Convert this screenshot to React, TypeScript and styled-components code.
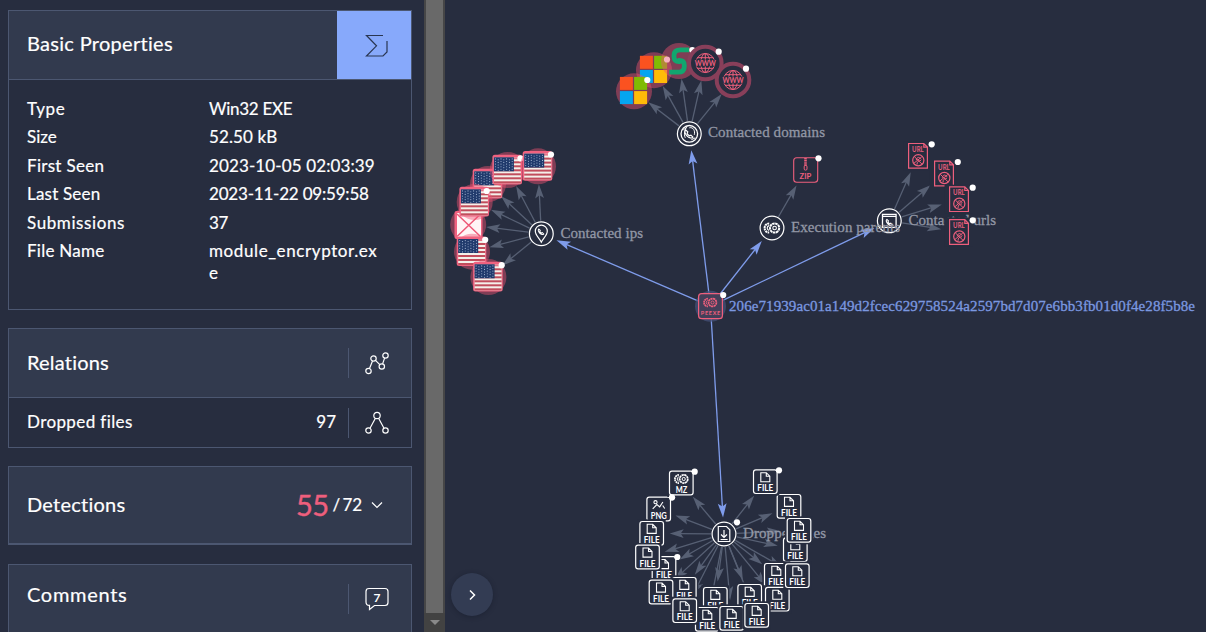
import React from "react";
import styled, { createGlobalStyle } from "styled-components";

const BG = "#272d3f";
const PINK = "#ee5f7d";
const HALO = "rgba(238, 82, 112, 0.45)";

const GlobalStyle = createGlobalStyle`
  * { box-sizing: border-box; }
  html, body { margin: 0; overflow: hidden; background: ${BG}; }
`;

const Page = styled.div`
  display: flex;
  width: 1206px;
  height: 632px;
  overflow: hidden;
  background: ${BG};
  color: #fff;
  font-family: Lato, "Liberation Sans", sans-serif;
  font-variant-ligatures: none;
`;

const Sidebar = styled.aside`
  display: flex;
  flex-direction: column;
  flex: none;
  gap: 18px;
  width: 424px;
  height: 632px;
  padding: 10px 12px 0 8px;
  overflow: hidden;
  -webkit-text-stroke: 0.2px currentColor;
`;

const Panel = styled.section<{ $height: number; $thick?: boolean; $offset?: number }>`
  flex: none;
  height: ${(p) => p.$height}px;
  margin-top: ${(p) => p.$offset ?? 0}px;
  border: 1px solid #4c5771;
  border-bottom-width: ${(p) => (p.$thick ? 2 : 1)}px;
`;

const PanelHeader = styled.header<{ $height: number; $line?: boolean }>`
  display: flex;
  align-items: center;
  justify-content: space-between;
  height: ${(p) => p.$height}px;
  padding-left: 18px;
  background: #323a4e;
  border-bottom: ${(p) => (p.$line ? "1px solid #4c5771" : "0")};
`;

const Title = styled.h2<{ $spacing: number; $lift: number }>`
  margin: 0;
  padding-bottom: ${(p) => p.$lift}px;
  font-size: 20px;
  font-weight: 400;
  line-height: 26px;
  letter-spacing: ${(p) => p.$spacing}px;
`;

const ReportButton = styled.div`
  display: flex;
  align-items: center;
  justify-content: center;
  width: 74px;
  height: 68px;
  padding: 1px 0 0 6px;
  background: #87a9fb;
`;

const ActionCell = styled.div`
  display: flex;
  align-items: center;
  justify-content: center;
  width: 63px;
  height: 30px;
  padding-right: 6px;
  border-left: 1px solid #4c5771;
`;

const Properties = styled.dl`
  display: flex;
  flex-direction: column;
  gap: 6.4px;
  margin: 0;
  padding: 18px;
`;

const Property = styled.div`
  display: grid;
  grid-template-columns: 182px 172px;
  font-size: 17px;
  line-height: 22px;
`;

const Label = styled.dt<{ $spacing: number }>`
  letter-spacing: ${(p) => p.$spacing}px;
`;

const Value = styled.dd<{ $spacing: number }>`
  margin: 0;
  overflow-wrap: anywhere;
  letter-spacing: ${(p) => p.$spacing}px;
`;

const Row = styled.div`
  display: flex;
  align-items: center;
  height: 49px;
  padding-left: 18px;
  font-size: 17px;
`;

const RowName = styled.span`
  flex: 1;
  padding-bottom: 2px;
  letter-spacing: 0.4px;
`;

const RowCount = styled.span`
  margin-right: 12px;
  padding-bottom: 2px;
`;

const Score = styled.div`
  display: flex;
  align-items: center;
  padding-right: 27px;
  gap: 4px;
`;

const Positives = styled.span`
  color: ${PINK};
  font-size: 29px;
  line-height: 36px;
  letter-spacing: -0.6px;
  -webkit-text-stroke: 0.4px currentColor;
`;

const Total = styled.span`
  margin-right: 4px;
  padding-bottom: 1px;
  font-size: 17px;
  letter-spacing: -0.1px;
  word-spacing: -1.8px;
`;

const Scrollbar = styled.div`
  display: flex;
  flex: none;
  flex-direction: column;
  width: 21px;
  height: 632px;
  background: #424242;
`;

const Thumb = styled.div`
  height: 613px;
  background: #696969;
  border: solid #464647;
  border-width: 0 2px;
`;

const ScrollArrow = styled.div`
  align-self: center;
  margin-top: 7px;
  border: solid transparent;
  border-width: 5px 5px 0;
  border-top-color: #8a8a8a;
`;

const Canvas = styled.main`
  position: relative;
  flex: 1;
  height: 632px;
`;

const Graph = styled.svg`
  display: block;
`;

const ExpandButton = styled.button`
  position: absolute;
  left: 6px;
  top: 573px;
  display: flex;
  align-items: center;
  justify-content: center;
  width: 42px;
  height: 43px;
  padding: 0;
  border: 0;
  border-radius: 50%;
  background: #333c53;
  box-shadow: 0 1px 5px rgba(15, 20, 35, 0.35);
`;

type Pt = [number, number];

function Edge({ from, to, color, end = 18, width = 1.3 }: { from: Pt; to: Pt; color: string; end?: number; width?: number }) {
  const dx = to[0] - from[0];
  const dy = to[1] - from[1];
  const len = Math.hypot(dx, dy);
  const angle = (Math.atan2(dy, dx) * 180) / Math.PI;
  const tip = len - end;
  return (
    <g transform={`translate(${from[0]} ${from[1]}) rotate(${angle})`}>
      <path d={`M13 0H${tip - 8}`} stroke={color} strokeWidth={width} />
      <path d={`M${tip} 0l-14 4.4 3-4.4-3-4.4z`} fill={color} />
    </g>
  );
}

const Dot = ({ at }: { at: Pt }) => <circle cx={at[0]} cy={at[1]} r="3.1" fill="#fff" />;

function Gears() {
  return (
    <g fill="none" stroke="currentColor" strokeWidth="1.1">
      <path d="M-2.2-4.6a4.6 4.6 0 1 0 0 9.2" strokeWidth="2" strokeDasharray="2 .5" />
      <path d="M-2.4-2.4a2.5 2.5 0 0 0 0 4.8" />
      <circle cx="3.2" cy="0" r="4.6" strokeWidth="2" strokeDasharray="2.6 .5" />
      <circle cx="3.2" cy="0" r="1.8" />
    </g>
  );
}

function Tile({ at, label, kind = "file", dot }: { at: Pt; label: string; kind?: string; dot?: Pt }) {
  return (
    <g>
      <g transform={`translate(${at[0]} ${at[1]})`} color="#fff">
        <rect x="-14" y="-14" width="28" height="28" fill={BG} />
        <rect x="-11.8" y="-11.8" width="23.6" height="23.6" rx="2.4" fill="none" stroke="#fff" strokeWidth="1.2" />
        {kind === "file" && (
          <path d="M-4.5-9H1l3.5 3.5V.1h-9zM1-9v3.5h3.5" fill="none" stroke="#fff" strokeWidth="1.1" />
        )}
        {kind === "gears" && (
          <g transform="translate(-.4 -4) scale(.88)">
            <Gears />
          </g>
        )}
        {kind === "image" && (
          <g fill="none" stroke="#fff" strokeWidth="1.1">
            <circle cx="-3.2" cy="-6.8" r="1.6" />
            <path d="M-6-.2l4.2-4.2 2.8 2.3L4.2-7M4-3.5l2 3" />
          </g>
        )}
        <text
          x={label === "MZ" ? -5.5 : -8}
          y="9.6"
          fontSize="8.8"
          fontWeight="700"
          fill="#fff"
          textLength={label === "MZ" ? 11.5 : 16}
          lengthAdjust="spacingAndGlyphs"
        >
          {label}
        </text>
      </g>
      {dot && <Dot at={dot} />}
    </g>
  );
}

function Flag({ at, dot }: { at: Pt; dot?: Pt }) {
  const stars = [];
  for (let r = 0; r < 5; r++) {
    for (let c = 0; c < 7; c++) {
      stars.push(<circle key={`${r}-${c}`} cx={-11.8 + c * 2.8} cy={-10.9 + r * 2.6 + (c % 2) * 0.9} r=".55" fill="#a4b6d2" />);
    }
  }
  return (
    <g>
      <circle cx={at[0]} cy={at[1]} r="18" fill={HALO} />
      <g transform={`translate(${at[0] - 0.5} ${at[1] - 0.2})`}>
        <rect x="-14.8" y="-15" width="29.6" height="29.6" rx="2.5" fill="#f06280" />
        <rect x="-13.3" y="-12.5" width="27" height="26" fill="#f4f0ea" />
        {[0, 1, 2, 3, 4, 5, 6].map((i) => (
          <rect key={i} x="-13.3" y={-12.5 + i * 4} width="27" height="2" fill={i === 0 ? "#e3768a" : "#c14d5c"} />
        ))}
        <rect x="-13.3" y="-12.5" width="20" height="14" fill="#203a6c" />
        {stars}
      </g>
      {dot && <Dot at={dot} />}
    </g>
  );
}

function Windows({ at }: { at: Pt }) {
  return (
    <g>
      <circle cx={at[0]} cy={at[1]} r="18" fill={HALO} />
      <g transform={`translate(${at[0] - 0.6} ${at[1] - 0.9})`}>
        <path d="M-13.5-13.5h13v13h-13z" fill="#fb5220" />
        <path d="M.7-13.5h13v13h-13z" fill="#80bb03" />
        <path d="M-13.5.7h13v13h-13z" fill="#05a5f0" />
        <path d="M.7.7h13v13h-13z" fill="#ffbb08" />
      </g>
    </g>
  );
}

function Web({ at, dot }: { at: Pt; dot: Pt }) {
  return (
    <g>
      <circle cx={at[0]} cy={at[1]} r="16.3" fill={BG} stroke="#883f5a" strokeWidth="4" />
      <g transform={`translate(${at[0]} ${at[1]})`} fill="none" stroke={PINK} strokeWidth="1">
        <circle r="9.5" />
        <ellipse rx="4.5" ry="9.5" />
        <path d="M0-9.5v19M-8-5.3h16M-8 5.3h16" />
        <rect x="-11" y="-3.4" width="22" height="6.8" fill={BG} stroke="none" />
        <text x="-10.6" y="3" fontSize="8" fontWeight="700" fill={PINK} stroke="none" textLength="21.2" lengthAdjust="spacingAndGlyphs">
          WWW
        </text>
      </g>
      <Dot at={dot} />
    </g>
  );
}

function UrlNode({ at, dot }: { at: Pt; dot: Pt }) {
  return (
    <g>
      <g transform={`translate(${at[0]} ${at[1]})`} fill="none" stroke={PINK} strokeWidth="1.2">
        <rect x="-14.5" y="-14.5" width="28.5" height="29" fill={BG} stroke="none" />
        <path d="M-9.4-12.3H5.8l3.6 3.6v21H-9.4zM5.8-12.3v3.6h3.6" />
        <circle cy="4.5" cx=".3" r="5.6" />
        <path d="M-3.5 1l7.6 7.4M-4 7.4L3.8 1M-1.8 4.3c1-3.5 3-3.5 5-.7M-1 8.8c0-3 1.5-4 4-4.1" strokeWidth="1" />
        <text x="-5.9" y="-3.8" fontSize="6.8" fontWeight="700" fill={PINK} stroke="none" textLength="11.6" lengthAdjust="spacingAndGlyphs">
          URL
        </text>
      </g>
      <Dot at={dot} />
    </g>
  );
}

const Hub = ({ at, children }: { at: Pt; children: React.ReactNode }) => (
  <g transform={`translate(${at[0]} ${at[1]})`} color="#fff">
    <circle r="11.9" fill={BG} stroke="#fff" strokeWidth="1.2" />
    {children}
  </g>
);

function GraphLabel({ x, y, width, color = "#9297a5", children }: { x: number; y: number; width: number; color?: string; children: string }) {
  return (
    <text x={x} y={y} fontSize="15" fill={color} stroke={color} strokeWidth=".3" fontFamily='"Liberation Serif", serif' textLength={width}>
      {children}
    </text>
  );
}

const HANDSET = "M-3.6-3.9c-1.6 1-1 3.6 1.2 5.9s4.9 2.9 6 1.3l-2-2-1.5.7c-1-.5-1.9-1.3-2.3-2.3l.7-1.5z";

const domainsHub: Pt = [689.3, 133.8];
const ipsHub: Pt = [541.3, 233.7];
const parentsHub: Pt = [772, 228];
const urlsHub: Pt = [889.3, 220.8];
const filesHub: Pt = [724, 534];
const root: Pt = [710.5, 306.2];

const domainNodes: Pt[] = [[634, 91.3], [654, 70.2], [679, 61], [705.3, 63], [733, 80]];
const ipNodes: Pt[] = [[538, 166.3], [507.7, 170], [488, 184], [474.7, 202], [468.2, 224.7], [472, 251.7], [488.4, 277]];
const urlNodes: Pt[] = [[918, 155.8], [944, 173.5], [959, 199.2], [959, 232]];

interface FileNode {
  at: Pt;
  label?: string;
  kind?: string;
  dot?: Pt;
}

const fileNodes: FileNode[] = [
  { at: [664, 568.5], dot: [677.3, 557] },
  { at: [684.3, 589.3] },
  { at: [715.3, 599.3] },
  { at: [749.7, 596.3] },
  { at: [795.3, 549.7] },
  { at: [776.3, 575.3] },
  { at: [777.3, 599.2] },
  { at: [707.3, 619.3] },
  { at: [658.7, 509], label: "PNG", kind: "image", dot: [672, 497.3] },
  { at: [681.3, 483], label: "MZ", kind: "gears", dot: [694.7, 471.7] },
  { at: [651.7, 533.3] },
  { at: [647.5, 557] },
  { at: [661, 592] },
  { at: [684.7, 610.7] },
  { at: [731.7, 618.3] },
  { at: [756.7, 615.3] },
  { at: [797.3, 575.7] },
  { at: [789, 506.3] },
  { at: [799, 530.3] },
  { at: [765.3, 481.7], dot: [779, 470.3] },
];

const GRAY = "#576074";
const BLUE = "#7f9ceb";

function RelationsGraph() {
  const groups: [Pt, Pt[]][] = [
    [domainsHub, domainNodes],
    [ipsHub, ipNodes],
    [parentsHub, [[805.5, 169.8]]],
    [urlsHub, urlNodes],
    [filesHub, fileNodes.map((n) => n.at)],
  ];
  return (
    <Graph width="761" height="632" viewBox="445 0 761 632">
      {groups.map(([hub, nodes], g) => nodes.map((n, i) => <Edge key={`${g}-${i}`} from={hub} to={n} color={GRAY} />))}
      {[domainsHub, ipsHub, parentsHub, urlsHub, filesHub].map((h, i) => (
        <Edge key={i} from={root} to={h} color={BLUE} end={16.5} />
      ))}

      <Hub at={domainsHub}>
        <circle r="8.3" fill="none" stroke="#fff" strokeWidth="1.3" />
        <path d="M-2-8C-4-5-6 0-4 4M0-6c4-1 6 3 5 7M-6-4l3-2M2 6l4-2" fill="none" stroke="#fff" strokeWidth="1" />
        <path d={HANDSET} fill="none" stroke="#fff" strokeWidth="1.2" />
      </Hub>
      <Hub at={ipsHub}>
        <path d="M0 8.5C-2 4.5-6 1.8-6-2.6a6 6 0 0 1 12 0C6 1.8 2 4.5 0 8.5z" fill="none" stroke="#fff" strokeWidth="1.2" />
        <path d={HANDSET} transform="translate(0 -2) scale(.68)" fill="none" stroke="#fff" strokeWidth="1.5" />
      </Hub>
      <Hub at={parentsHub}>
        <g transform="translate(-.6 0)">
          <Gears />
        </g>
      </Hub>
      <Hub at={urlsHub}>
        <path d="M-6.8-6.5H6.8V6.5H-6.8zM-6.8-4.4H6.8" fill="none" stroke="#fff" strokeWidth="1.3" />
        <path d={HANDSET} transform="translate(.3 1.5) scale(.75)" fill="none" stroke="#fff" strokeWidth="1.5" />
      </Hub>
      <Hub at={filesHub}>
        <path d="M-5.7-7.5H2.5l3.3 3.3V7.5H-5.7zM0-4v7M-3 .5L0 3.5 3 .5M-3.4 5.5H3.6" fill="none" stroke="#fff" strokeWidth="1.2" />
      </Hub>

      <GraphLabel x={708} y={137} width={117}>Contacted domains</GraphLabel>
      <GraphLabel x={560.5} y={237.7} width={82.5}>Contacted ips</GraphLabel>
      <GraphLabel x={791} y={231.6} width={109}>Execution parents</GraphLabel>
      <GraphLabel x={908.5} y={224.6} width={87.5}>Contacted urls</GraphLabel>
      <GraphLabel x={743} y={538.2} width={83}>Dropped files</GraphLabel>
      <GraphLabel x={729} y={310.6} width={466} color="#7b98e0">
        206e71939ac01a149d2fcec629758524a2597bd7d07e6bb3fb01d0f4e28f5b8e
      </GraphLabel>

      <Windows at={domainNodes[1]} />
      <Dot at={[667, 59.5]} />
      <circle cx="679" cy="61" r="18" fill={HALO} />
      <path
        d="M689 49.8h-8.500q-6.5 0-6.5 5.5v1.5q0 4.7 5 4.7h1.5M669.3 72.2h8.5q6.5 0 6.5-5.5v-1.5q0-4.7-5-4.7h-1.5"
        fill="none"
        stroke="#12a66f"
        strokeWidth="4.8"
      />
      <Dot at={[692.3, 50]} />
      <Web at={domainNodes[3]} dot={[718.7, 51.7]} />
      <Web at={domainNodes[4]} dot={[746, 68.7]} />
      <Windows at={domainNodes[0]} />
      <Dot at={[647.3, 80]} />

      <Flag at={ipNodes[2]} />
      <Flag at={ipNodes[1]} dot={[520.5, 158.3]} />
      <Flag at={ipNodes[0]} dot={[551, 154.5]} />
      <circle cx={ipNodes[4][0]} cy={ipNodes[4][1]} r="18" fill={HALO} />
      <rect x="454.5" y="211" width="28" height="28" rx="2" fill="#f06280" />
      <rect x="457" y="213" width="24" height="24" fill="#fff4f6" />
      <path d="M457 214l23.5 22.5M480.500 214L457 236.5" stroke="#ee5877" strokeWidth="1.5" />
      <Flag at={ipNodes[3]} dot={[486.7, 191]} />
      <Flag at={ipNodes[5]} dot={[485.2, 239.8]} />
      <Flag at={ipNodes[6]} dot={[501.7, 265.2]} />

      <rect x="793.7" y="157.7" width="24" height="24.6" rx="3" fill={BG} stroke={PINK} strokeWidth="1.1" />
      <path d="M805.5 158v8" stroke={PINK} strokeWidth="2.6" strokeDasharray="1.5 .6" />
      <rect x="804.2" y="165.5" width="2.8" height="4.6" rx="1.2" fill="none" stroke={PINK} />
      <text x="799.5" y="178.8" fontSize="8" fontWeight="700" fill={PINK} textLength="11.7" lengthAdjust="spacingAndGlyphs">ZIP</text>
      <Dot at={[818.5, 158.3]} />

      <UrlNode at={urlNodes[0]} dot={[931.7, 144.3]} />
      <UrlNode at={urlNodes[1]} dot={[957.8, 162]} />
      <UrlNode at={urlNodes[2]} dot={[972.7, 187.7]} />
      <UrlNode at={urlNodes[3]} dot={[972.7, 220.3]} />

      {fileNodes.map((n, i) => (
        <Tile key={i} at={n.at} label={n.label ?? "FILE"} kind={n.kind} dot={n.dot} />
      ))}
      <Dot at={[672, 497.3]} />
      <Dot at={[737, 522.3]} />

      <circle cx={root[0]} cy={root[1]} r="15.5" fill="#465078" opacity=".75" />
      <rect x="698.6" y="293.7" width="23.8" height="25" rx="3" fill="#433f59" stroke={PINK} strokeWidth="1.2" />
      <g transform="translate(709.8 302.500) scale(.85)" color={PINK}>
        <Gears />
      </g>
      <text x="700.8" y="315" fontSize="5.5" fontWeight="700" fill={PINK} textLength="19.4">PEEXE</text>
      <Dot at={[723.2, 295]} />
    </Graph>
  );
}

const PROPERTIES: [string, string, number, number][] = [
  ["Type", "Win32 EXE", 0.6, -0.3],
  ["Size", "52.50 kB", 0, 0.1],
  ["First Seen", "2023-10-05 02:03:39", 0.3, 0.12],
  ["Last Seen", "2023-11-22 09:59:58", 0.2, -0.2],
  ["Submissions", "37", 0.6, -0.3],
  ["File Name", "module_encryptor.exe", 0.25, 0.6],
];

export default function App() {
  return (
    <>
      <GlobalStyle />
      <Page>
        <Sidebar>
          <Panel $height={300}>
            <PanelHeader $height={69} $line>
              <Title $spacing={0.3} $lift={4}>Basic Properties</Title>
              <ReportButton>
                <svg width="26" height="26" fill="none" stroke="#293652" strokeWidth="1.2">
                  <path d="M19 2.500H2.500l10 10.300L2.500 23H19l4-4V8" />
                </svg>
              </ReportButton>
            </PanelHeader>
            <Properties>
              {PROPERTIES.map(([name, value, a, b]) => (
                <Property key={name}>
                  <Label $spacing={a}>{name}</Label>
                  <Value $spacing={b}>{value}</Value>
                </Property>
              ))}
            </Properties>
          </Panel>

          <Panel $height={120}>
            <PanelHeader $height={69} $line>
              <Title $spacing={0.2} $lift={2}>Relations</Title>
              <ActionCell>
                <svg width="26" height="26" fill="none" stroke="#fff" strokeWidth="1.2">
                  <circle cx="4.5" cy="21" r="2.7" />
                  <circle cx="9.5" cy="8.5" r="2.7" />
                  <circle cx="17.8" cy="16.5" r="2.7" />
                  <circle cx="21.5" cy="5.5" r="2.7" />
                  <path d="M5.5 18.500l3-7.500M11.500 10.400l4.300 4.200M18.600 13.900l2-5.800" />
                </svg>
              </ActionCell>
            </PanelHeader>
            <Row>
              <RowName>Dropped files</RowName>
              <RowCount>97</RowCount>
              <ActionCell>
                <svg width="26" height="26" fill="none" stroke="#fff" strokeWidth="1.2">
                  <circle cx="13" cy="5.5" r="3.2" />
                  <circle cx="4.5" cy="20.5" r="2.7" />
                  <circle cx="21.5" cy="20.5" r="2.7" />
                  <path d="M11.400 8.300L6 18.200M14.600 8.300l5.400 9.900" />
                </svg>
              </ActionCell>
            </Row>
          </Panel>

          <Panel $height={79} $thick>
            <PanelHeader $height={76}>
              <Title $spacing={0.25} $lift={2}>Detections</Title>
              <Score>
                <Positives>55</Positives>
                <Total>/ 72</Total>
                <svg width="14" height="14" fill="none" stroke="#fff" strokeWidth="1.2">
                  <path d="M2 4.500l5 5 5-5" />
                </svg>
              </Score>
            </PanelHeader>
          </Panel>

          <Panel $height={80} $offset={1}>
            <PanelHeader $height={67}>
              <Title $spacing={0.7} $lift={9}>Comments</Title>
              <ActionCell>
                <svg width="26" height="26" fill="none" stroke="#fff" strokeWidth="1.2">
                  <path d="M5 2.500h16q3 0 3 3v11q0 3-3 3H10.500L5.500 23.500v-4.200Q2 19.500 2 16V5.500q0-3 3-3z" />
                  <text x="9.5" y="15.5" fontSize="12" fontWeight="700" fill="#fff" stroke="none">7</text>
                </svg>
              </ActionCell>
            </PanelHeader>
          </Panel>
        </Sidebar>
        <Scrollbar>
          <Thumb />
          <ScrollArrow />
        </Scrollbar>
        <Canvas>
          <RelationsGraph />
          <ExpandButton aria-label="Expand">
            <svg width="12" height="14" fill="none" stroke="#fff" strokeWidth="1.5">
              <path d="M4 2.500L8.500 7 4 11.500" />
            </svg>
          </ExpandButton>
        </Canvas>
      </Page>
    </>
  );
}
